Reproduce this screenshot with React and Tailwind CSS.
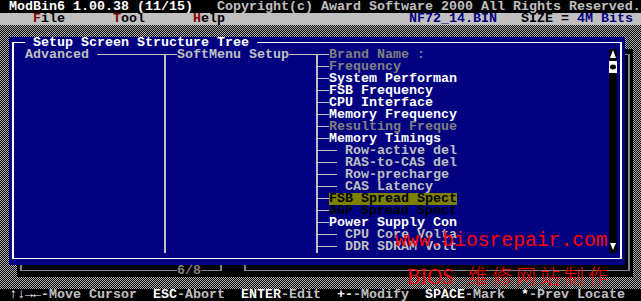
const BOX = { "─": "lr", "│": "ud", "┌": "rd", "┐": "ld", "└": "ur", "┘": "ul", "├": "udr", "┬": "lrd" };

const W = "text-white";
const G = "text-[#c0c0c0]";
const D = "text-[#808080]";
const K = "text-black";
const R = "text-[#800000]";
const N = "text-[#000080]";

function Glyph({ ch }) {
  const s = BOX[ch];
  return (
    <svg width="8" height="12" className="block shrink-0" fill="currentColor">
      {s.includes("l") && <rect x="0" y="5" width="5" height="1" />}
      {s.includes("r") && <rect x="3" y="5" width="5" height="1" />}
      {s.includes("u") && <rect x="3" y="0" width="2" height="6" />}
      {s.includes("d") && <rect x="3" y="5" width="2" height="7" />}
    </svg>
  );
}

function HRun({ n }) {
  return (
    <svg width={8 * n} height="12" className="block shrink-0" fill="currentColor">
      <rect x="0" y="5" width={8 * n} height="1" />
    </svg>
  );
}

function split(t) {
  const out = [];
  let buf = "";
  const flush = () => {
    if (buf) out.push({ k: "t", v: buf });
    buf = "";
  };
  for (let i = 0; i < t.length; i++) {
    const ch = t[i];
    if (ch === "─") {
      flush();
      let n = 0;
      while (t[i] === "─") {
        n++;
        i++;
      }
      i--;
      out.push({ k: "h", n });
    } else if (BOX[ch]) {
      flush();
      out.push({ k: "g", ch });
    } else buf += ch;
  }
  flush();
  return out;
}

function Seg({ t, c = "", bg = "" }) {
  return (
    <span className={`flex h-[12px] shrink-0 ${c} ${bg}`}>
      {split(t).map((p, i) =>
        p.k === "t" ? (
          <span key={i} className="whitespace-pre">{p.v}</span>
        ) : p.k === "h" ? (
          <HRun key={i} n={p.n} />
        ) : (
          <Glyph key={i} ch={p.ch} />
        )
      )}
    </span>
  );
}

function Row({ segs, className = "" }) {
  return (
    <div className={`flex h-[12px] ${className}`}>
      {segs.map(([t, c, bg], i) => (
        <Seg key={i} t={t} c={c} bg={bg} />
      ))}
    </div>
  );
}

function Scroll({ kind }) {
  if (kind === "up")
    return (
      <svg width="8" height="12" className="block shrink-0 bg-black">
        <polygon points="4,1 7,9 1,9" fill="#fff" />
      </svg>
    );
  if (kind === "thumb")
    return (
      <svg width="8" height="12" className="block shrink-0 bg-white">
        <ellipse cx="4" cy="6" rx="3" ry="2.5" fill="#000" />
      </svg>
    );
  if (kind === "down")
    return (
      <svg width="8" height="12" className="block shrink-0 bg-black">
        <polygon points="1,2 7,2 4,9" fill="#fff" />
      </svg>
    );
  return <div className="w-[8px] h-[12px] shrink-0 bg-black" />;
}

function Line({ scroll, children }) {
  return (
    <div className="flex h-[12px]">
      <Seg t="│" c={W} />
      <div className="flex w-[592px]">{children}</div>
      <Scroll kind={scroll} />
      <Seg t="│" c={W} />
    </div>
  );
}

const tree = [
  [1, "Frequency", D],
  [1, "System Performan", W],
  [1, "FSB Frequency", W],
  [1, "CPU Interface", W],
  [1, "Memory Frequency", W],
  [1, "Resulting Freque", D],
  [1, "Memory Timings", W],
  [2, "Row-active del", G],
  [2, "RAS-to-CAS del", G],
  [2, "Row-precharge", G],
  [2, "CAS Latency", G],
  [1, "FSB Spread Spect", K, "bg-[#808000]"],
  [1, "AGP Spread Spect", K],
  [1, "Power Supply Con", W],
  [2, "CPU Core Volta", G],
  [2, "DDR SDRAM Volt", G],
];

function Panel() {
  const sp = " ".repeat(18);
  return (
    <div className="w-[616px] bg-[#000080] flex flex-col">
      <Row
        segs={[
          ["┌─ ", W],
          ["Setup Screen Structure Tree", W],
          [" " + "─".repeat(45) + "┐", W],
        ]}
      />
      <Line scroll="up">
        <Seg t=" Advanced " c={G} />
        <Seg t={"─".repeat(8) + "┬─"} c={G} />
        <Seg t="SoftMenu Setup" c={G} />
        <Seg t="───┬─" c={G} />
        <Seg t="Brand Name :" c={D} />
      </Line>
      {tree.map(([lvl, label, color, bg], i) => (
        <Line key={label} scroll={i === 0 ? "thumb" : i === tree.length - 1 ? "down" : null}>
          <Seg t={sp + "│" + sp + (lvl === 1 ? "├─" : "├── ")} c={G} />
          <Seg t={label} c={color} bg={bg} />
        </Line>
      ))}
      <Row segs={[["└" + "─".repeat(75) + "┘", W]]} />
    </div>
  );
}

export default function App() {
  return (
    <div className="relative w-[641px] h-[301px] overflow-hidden bg-black font-['Liberation_Mono','DejaVu_Sans_Mono',monospace] text-[13.333px] leading-[12px] font-bold">
      <div className="pt-px pl-px h-[13px]">
        <Row
          segs={[
            [" ModBin6 1.00.38 (11/15)", W],
            ["   Copyright(c) Award Software 2000 All Rights Reserved.", G],
          ]}
        />
      </div>

      <div className="pl-px h-[12px] bg-[#c0c0c0]">
        <Row
          segs={[
            ["    "],
            ["F", R],
            ["ile", K],
            ["      "],
            ["T", R],
            ["ool", K],
            ["      "],
            ["H", R],
            ["elp", K],
            [" ".repeat(23)],
            ["NF72_14.BIN", N],
            ["   "],
            ["SIZE =", K],
            [" "],
            ["4M Bits", N],
          ]}
        />
      </div>

      <div className="h-[264px] pl-px flex flex-col bg-[image:repeating-conic-gradient(#b0b0b0_0_25%,#000_0_50%)] bg-[length:2px_2px]">
        <div className="h-[12px]" />
        <div className="flex pl-[8px]">
          <Panel />
          <div className="flex flex-col w-[8px]">
            <div className="h-[12px]" />
            <div className="bg-black flex flex-col text-[#808080]">
              <Glyph ch="┐" />
              {Array.from({ length: 17 }, (_, i) => (
                <Glyph key={i} ch="│" />
              ))}
            </div>
          </div>
        </div>
        <div className="flex h-[12px] pl-[16px]">
          <div className="flex w-[616px] bg-black">
            <Seg
              t={"└" + "─".repeat(19) + "6/8──┘  └" + "─".repeat(47) + "┘"}
              c={D}
            />
          </div>
        </div>
      </div>

      <div className="pl-px h-[12px] bg-black">
        <Row
          segs={[
            [" "],
            ["↑↓→←", W],
            ["-Move Cursor", G],
            ["  "],
            ["ESC", W],
            ["-Abort", G],
            ["  "],
            ["ENTER", W],
            ["-Edit", G],
            ["  "],
            ["+-", W],
            ["-Modify", G],
            ["  "],
            ["SPACE", W],
            ["-Mark", G],
            ["  "],
            ["*", W],
            ["-Prev Locate", G],
          ]}
        />
      </div>

      <div className="absolute left-[395px] top-[231px] text-[19.7px] leading-[20px] font-normal text-[#ff0000] whitespace-pre">
        www.biosrepair.com
      </div>
      <div className="absolute left-[407px] top-[265px] flex items-baseline text-[#ff0000] font-normal leading-[22px] whitespace-pre">
        <span className="inline-block w-[61px] font-['Liberation_Serif',serif] text-[24px]">
          <span className="inline-block scale-x-85 origin-left">BIOS</span>
        </span>
        <span className="font-['Noto_Sans_CJK_SC',sans-serif] text-[20px] tracking-[4px] font-light">维修网站制作</span>
      </div>
    </div>
  );
}
